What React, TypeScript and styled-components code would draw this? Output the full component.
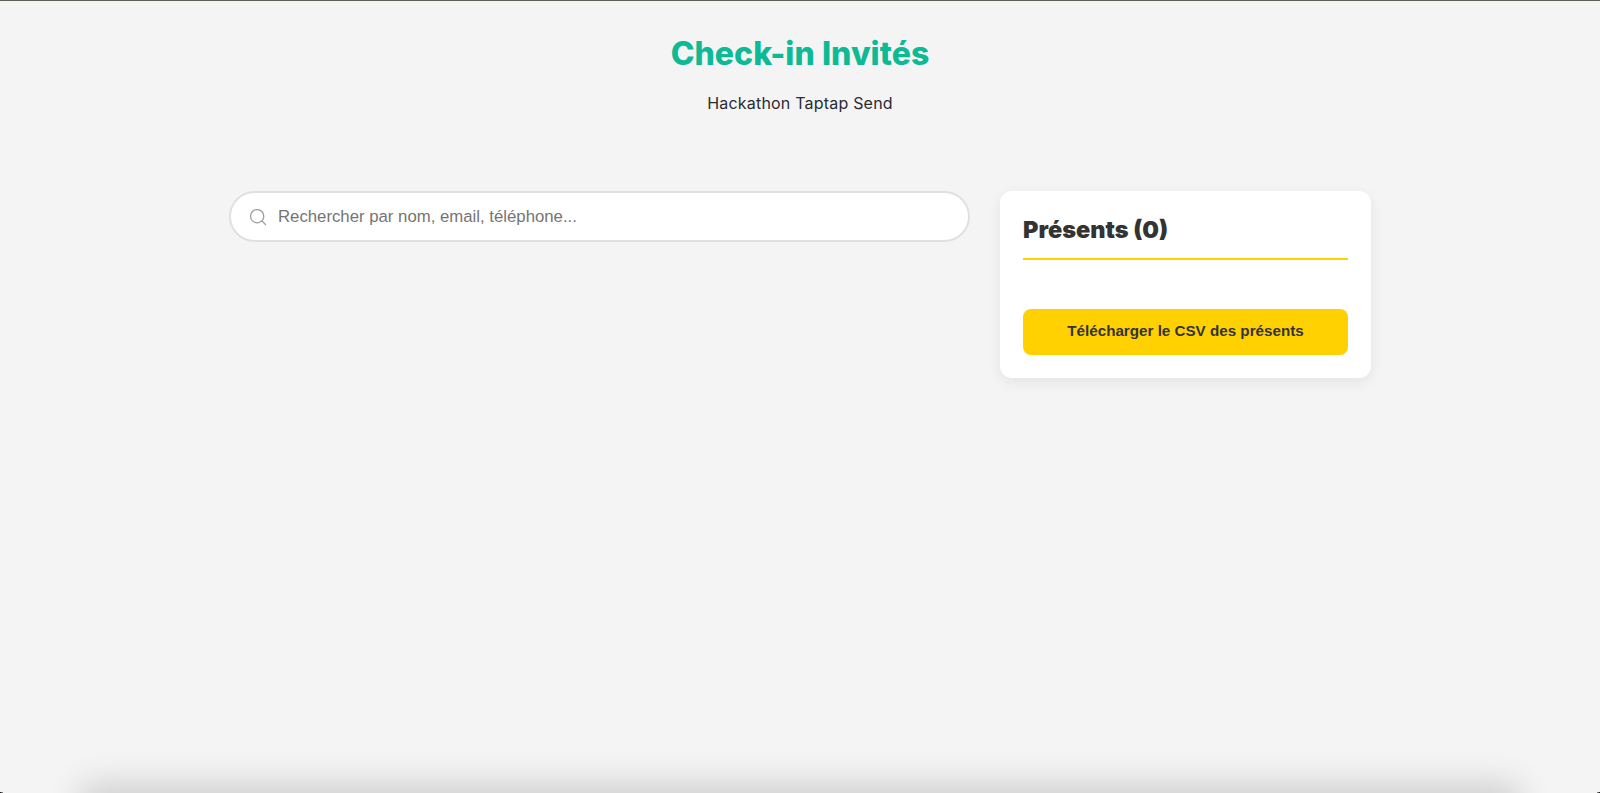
import styled, { createGlobalStyle } from "styled-components"
import { Search } from "lucide-react"

const GlobalStyle = createGlobalStyle`
    * {
        box-sizing: border-box;
    }
    html, body {
        margin: 0;
        height: 100%;
        background: #f4f4f4;
    }
`

const Page = styled.div`
    height: 793px;
    overflow: hidden;
    position: relative;
    border-top: 1px solid #5f5f57;
    background: #f4f4f4;
    font-family: "Liberation Sans", Arial, sans-serif;

    &::before {
        content: "";
        position: absolute;
        left: 0;
        right: 0;
        bottom: 0;
        height: 7px;
        background:
            radial-gradient(circle at 100% 0, transparent 6px, #111 7px) left bottom / 3px 7px no-repeat,
            radial-gradient(circle at 0 0, transparent 6px, #111 7px) right bottom / 3px 7px no-repeat;
    }

    &::after {
        content: "";
        position: absolute;
        left: 88px;
        right: 88px;
        bottom: -30px;
        height: 30px;
        box-shadow: 0 0 34px 7px rgba(0, 0, 0, 0.17);
    }
`

const Header = styled.header`
    display: flex;
    flex-direction: column;
    align-items: center;
    padding-top: 33px;
`

const Title = styled.h1`
    margin: 0;
    font-family: Inter, sans-serif;
    font-size: 32px;
    line-height: 40px;
    font-weight: 800;
    letter-spacing: 0.05px;
    color: #0dba95;
`

const Subtitle = styled.p`
    margin: 18px 0 0;
    font-family: Inter, sans-serif;
    font-size: 16px;
    line-height: 22px;
    font-weight: 400;
    letter-spacing: 0.2px;
    color: #2b2b33;
`

const Content = styled.main`
    width: 1142px;
    margin: 77px auto 0;
    display: flex;
    align-items: flex-start;
    gap: 30px;
`

const SearchBox = styled.label`
    flex: 1;
    height: 51px;
    display: flex;
    align-items: center;
    gap: 10px;
    padding-left: 17px;
    background: #fff;
    border: 2px solid #e0e0e0;
    border-radius: 26px;
    color: #9a9a9a;
`

const SearchInput = styled.input`
    flex: 1;
    border: none;
    outline: none;
    background: none;
    padding: 0;
    font-family: "Liberation Sans", Arial, sans-serif;
    font-size: 16.75px;
    color: #2d2d2d;

    &::placeholder {
        color: #757575;
        opacity: 1;
    }
`

const Card = styled.aside`
    width: 371px;
    height: 187px;
    padding: 23px;
    background: #fff;
    border-radius: 12px;
    box-shadow: 0 4px 14px rgba(0, 0, 0, 0.07);
`

const CardTitle = styled.h2`
    margin: 0;
    padding: 1px 0 13px;
    font-family: Inter, sans-serif;
    font-size: 23.5px;
    line-height: 30px;
    font-weight: 900;
    color: #333;
    border-bottom: 2px solid #ffd100;
`

const DownloadButton = styled.button`
    display: block;
    width: 100%;
    height: 46px;
    margin-top: 49px;
    border: none;
    border-radius: 8px;
    background: #ffd100;
    font-family: "Liberation Sans", Arial, sans-serif;
    font-size: 15.2px;
    line-height: 44px;
    padding: 0 0 2px;
    font-weight: 700;
    color: #33333d;
    cursor: pointer;
`

const App = () => {
    return (
        <Page>
            <GlobalStyle />
            <Header>
                <Title>Check-in Invités</Title>
                <Subtitle>Hackathon Taptap Send</Subtitle>
            </Header>
            <Content>
                <SearchBox>
                    <Search size={20} strokeWidth={1.5} />
                    <SearchInput placeholder="Rechercher par nom, email, téléphone..." />
                </SearchBox>
                <Card>
                    <CardTitle>Présents (0)</CardTitle>
                    <DownloadButton>Télécharger le CSV des présents</DownloadButton>
                </Card>
            </Content>
        </Page>
    )
}

export default App
